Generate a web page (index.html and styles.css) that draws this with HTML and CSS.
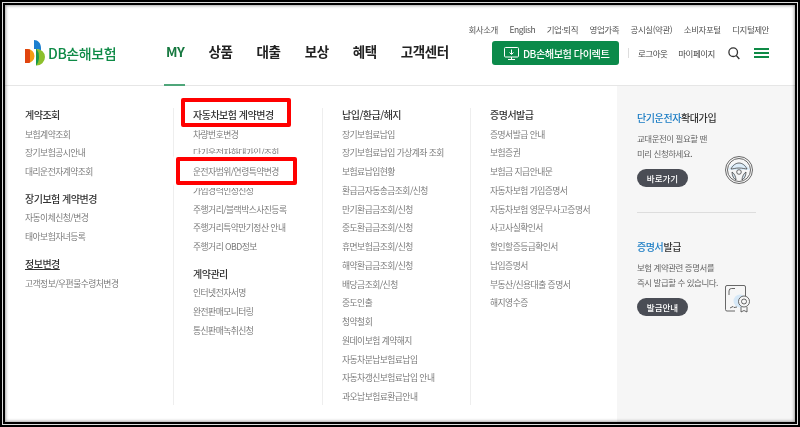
FILE: index.html
```html
<!DOCTYPE html>
<html lang="ko">
<head>
  <meta charset="utf-8">
  <link rel="stylesheet" href="styles.css">
</head>
<body>
  <div class="frame">
    <div class="page">
      <!-- Header -->
      <div class="header">
        <div class="util-links">
          <a>회사소개</a><a>English</a><a>기업·퇴직</a><a>영업가족</a><a>공시실(약관)</a><a>소비자포털</a><a>디지털제안</a>
        </div>
        <div class="header-main">
          <div class="logo">
            <svg class="logo-mark" width="21" height="26" viewBox="0 0 21 26">
              <path d="M0 9h2.500a7 7 0 0 1 0 14H0z" fill="#f39c12"/>
              <path d="M0 9h2.500q1.500 0 2.500 .5v13q-1 .5-2.500 .5H0z" fill="#e0440e"/>
              <path d="M9 0c4 0 7 3 7 8v3c-1.500-1.500-4-2-7-2z" fill="#1b7fd0"/>
              <path d="M11 9h.500a8.500 8 0 0 1 8.500 8 8.500 8.500 0 0 1-9 8.500z" fill="#8cc02c"/>
              <path d="M11 9h.500q2.500 3 2.500 8t-3 8.500z" fill="#17994b"/>
            </svg>
            <span class="logo-text">DB손해보험</span>
          </div>
          <div class="gnb">
            <a class="gnb-item active">MY</a><a class="gnb-item">상품</a><a class="gnb-item">대출</a><a class="gnb-item">보상</a><a class="gnb-item">혜택</a><a class="gnb-item">고객센터</a>
          </div>
          <a class="direct-btn">
            <svg width="15" height="15" viewBox="0 0 15 15" fill="none" stroke="#fff" stroke-width="1">
              <rect x="0.5" y="1.500" width="14" height="9.500" rx="1"/>
              <path d="M7.500 3.500v4.500M5.500 6.500l2 2 2-2M4 13.500h7M7.500 11v2.500"/>
            </svg>
            DB손해보험 다이렉트
          </a>
          <div class="member">
            <a>로그아웃</a><a>마이페이지</a>
          </div>
          <svg class="search-icon" width="12" height="13" viewBox="0 0 12 13" fill="none" stroke="#333" stroke-width="1.300">
            <circle cx="5.200" cy="5.200" r="4.300"/>
            <path d="M8.300 8.500l3 3.500"/>
          </svg>
          <div class="menu-icon"><i></i><i></i><i></i></div>
        </div>
      </div>

      <!-- All menu -->
      <div class="menu">
        <div class="menu-col">
          <div class="menu-title">계약조회</div>
          <a class="menu-item">보험계약조회</a>
          <a class="menu-item">장기보험공시안내</a>
          <a class="menu-item">대리운전자계약조회</a>
          <div class="menu-title next">장기보험 계약변경</div>
          <a class="menu-item">자동이체신청/변경</a>
          <a class="menu-item">태아보험자녀등록</a>
          <div class="menu-title next"><u>정보변경</u></div>
          <a class="menu-item">고객정보/우편물수령처변경</a>
        </div>
        <div class="menu-col">
          <div class="menu-title marked mark-title">자동차보험 계약변경</div>
          <a class="menu-item">차량번호변경</a>
          <a class="menu-item">다기운전자화대가입/조회</a>
          <a class="menu-item marked mark-item">운전자범위/연령특약변경</a>
          <a class="menu-item">가입경력인정신청</a>
          <a class="menu-item">주행거리/블랙박스사진등록</a>
          <a class="menu-item">주행거리특약만기정산 안내</a>
          <a class="menu-item">주행거리 OBD정보</a>
          <div class="menu-title next">계약관리</div>
          <a class="menu-item">인터넷전자서명</a>
          <a class="menu-item">완전판매모니터링</a>
          <a class="menu-item">통신판매녹취신청</a>
        </div>
        <div class="menu-col">
          <div class="menu-title">납입/환급/해지</div>
          <a class="menu-item">장기보험료납입</a>
          <a class="menu-item">장기보험료납입 가상계좌 조회</a>
          <a class="menu-item">보험료납입현황</a>
          <a class="menu-item">환급금자동송금조회/신청</a>
          <a class="menu-item">만기환급금조회/신청</a>
          <a class="menu-item">중도환급금조회/신청</a>
          <a class="menu-item">휴면보험금조회/신청</a>
          <a class="menu-item">해약환급금조회/신청</a>
          <a class="menu-item">배당금조회/신청</a>
          <a class="menu-item">중도인출</a>
          <a class="menu-item">청약철회</a>
          <a class="menu-item">원데이보험 계약해지</a>
          <a class="menu-item">자동차분납보험료납입</a>
          <a class="menu-item">자동차갱신보험료납입 안내</a>
          <a class="menu-item">과오납보험료환급안내</a>
        </div>
        <div class="menu-col">
          <div class="menu-title">증명서발급</div>
          <a class="menu-item">증명서발급 안내</a>
          <a class="menu-item">보험증권</a>
          <a class="menu-item">보험금 지급안내문</a>
          <a class="menu-item">자동차보험 가입증명서</a>
          <a class="menu-item">자동차보험 영문무사고증명서</a>
          <a class="menu-item">사고사실확인서</a>
          <a class="menu-item">할인할증등급확인서</a>
          <a class="menu-item">납입증명서</a>
          <a class="menu-item">부동산/신용대출 증명서</a>
          <a class="menu-item">해지영수증</a>
        </div>

        <!-- Side promo -->
        <div class="side">
          <div class="promo">
            <div class="promo-title"><span class="blue">단기운전자</span>확대가입</div>
            <p class="promo-text">교대운전이 필요할 땐<br>미리 신청하세요.</p>
            <a class="promo-btn">바로가기</a>
            <svg class="promo-icon wheel" width="30" height="30" viewBox="0 0 30 30" fill="none" stroke="#444" stroke-width="0.800">
              <circle cx="15" cy="15" r="13.500"/>
              <circle cx="15" cy="15" r="11.500"/>
              <path d="M4 15c3-6 7-7 11-7s8 1 11 7" fill="#dcecf8" stroke="none"/>
              <path d="M7 14c2-4 5-6 8-6s6 2 8 6c-2 0-4-1-8-1s-6 1-8 1z"/>
              <circle cx="15" cy="17" r="2.300"/>
              <path d="M8 17c2 1 4 5 4 8-2-1-4-4-4-8zM22 17c-2 1-4 5-4 8 2-1 4-4 4-8z" fill="#dcecf8"/>
            </svg>
          </div>
          <div class="promo">
            <div class="promo-title"><span class="blue">증명서</span>발급</div>
            <p class="promo-text">보험 계약관련 증명서를<br>즉시 발급할 수 있습니다.</p>
            <a class="promo-btn">발급안내</a>
            <svg class="promo-icon cert" width="26" height="28" viewBox="0 0 26 28" fill="none" stroke="#444" stroke-width="0.800">
              <circle cx="15" cy="16" r="6.500" fill="#d6e8f7" stroke="none"/>
              <path d="M10 26H2a1.500 1.500 0 0 1-1.500-1.500V2A1.500 1.500 0 0 1 2 .5h17A1.500 1.500 0 0 1 20.500 2v9"/>
              <path d="M4 10V6a2.500 2.500 0 0 1 2.500-2.500H10"/>
              <path d="M5 23l3-1.500 1 1 3-.5"/>
              <circle cx="19" cy="16.500" r="5.500" fill="#f6f6f6"/>
              <circle cx="19" cy="16.500" r="2.500"/>
              <path d="M16 22v5l3-1.500 3 1.500v-5"/>
            </svg>
          </div>
        </div>
      </div>
    </div>
  </div>
</body>
</html>
```

FILE: styles.css
```css
* {
  box-sizing: border-box;
}

html, body {
  margin: 0;
  background: #fff;
}

body {
  width: 800px;
  height: 427px;
  overflow: hidden;
  font-family: "Noto Sans CJK KR", "Noto Sans", sans-serif;
  color: #222;
}

a {
  color: inherit;
  text-decoration: none;
}

/* Screenshot frame */
.frame {
  width: 800px;
  height: 427px;
  border: 2px solid #000;
  padding: 1px;
  background: #ddd;
}

.page {
  position: relative;
  height: 100%;
  border: 2px solid #000;
  background: #fff;
  overflow: hidden;
}

.page::after {
  content: "";
  position: absolute;
  inset: 0;
  box-shadow: inset 0 0 3px 1px rgba(0,0,0,0.35);
  pointer-events: none;
}

/* The capture is a scaled-down image, so everything in it is a little soft */
.header,
.menu {
  filter: blur(0.45px);
}

/* Header */
.header {
  height: 81px;
  border-bottom: 1px solid #e6e6e6;
}

.util-links {
  display: flex;
  justify-content: flex-end;
  gap: 11.500px;
  height: 36px;
  padding: 18px 26px 0 0;
  font-size: 8.500px;
  line-height: 13px;
  letter-spacing: -0.450px;
  color: #555;
}

.header-main {
  display: flex;
  align-items: center;
  height: 24px;
  padding-left: 20px;
}

.logo {
  display: flex;
  align-items: center;
  width: 141px;
  margin-top: -1px;
}

.logo-mark {
  flex-shrink: 0;
  margin-right: 2px;
}

.logo-text {
  font-size: 14px;
  font-weight: 500;
  letter-spacing: -0.400px;
  color: #0e8a46;
}

.gnb {
  display: flex;
  gap: 24px;
  width: 326px;
  height: 45px;
  margin-top: 21px;
  font-size: 13.500px;
  font-weight: 700;
  letter-spacing: -0.400px;
}

.gnb-item {
  position: relative;
  line-height: 20px;
  height: 45px;
}

.gnb-item.active {
  color: #16783f;
}

.gnb-item.active::after {
  content: "";
  position: absolute;
  left: -2px;
  right: 0;
  bottom: 0;
  height: 2px;
  background: #4fa67a;
}

.direct-btn {
  display: flex;
  align-items: center;
  gap: 4px;
  width: 127px;
  height: 24px;
  padding-left: 12px;
  border-radius: 3px;
  background: #0b8a4a;
  color: #fff;
  font-size: 10.200px;
  font-weight: 500;
  letter-spacing: -0.500px;
}

.member {
  display: flex;
  gap: 11px;
  margin-left: 9px;
  padding-left: 10px;
  font-size: 8.500px;
  letter-spacing: -0.500px;
  color: #444;
  background: linear-gradient(#ddd, #ddd) left center / 1px 10px no-repeat;
}

.search-icon {
  margin-left: 13px;
}

.menu-icon {
  display: flex;
  flex-direction: column;
  gap: 2px;
  width: 15px;
  margin-left: 14px;
}

.menu-icon i {
  height: 2px;
  background: #0e8a46;
}

/* All menu */
.menu {
  display: grid;
  grid-template-columns: 148px 149px 148px 148px 1fr;
  height: 336px;
  padding-left: 20px;
}

.menu-col {
  height: 297px;
  margin-top: 22px;
  padding-left: 19px;
  border-left: 1px solid #eee;
}

.menu-col:first-child {
  padding-left: 0;
  border-left: 0;
}

.menu-title {
  height: 20.600px;
  font-size: 10px;
  font-weight: 500;
  line-height: 19px;
  letter-spacing: -0.500px;
  color: #333;
}

.menu-title:first-child {
  margin-top: -3px;
}

.menu-title.next {
  margin-top: 7px;
}

.menu-item {
  display: block;
  height: 18.750px;
  font-size: 8.800px;
  line-height: 18.750px;
  letter-spacing: -0.550px;
  color: #7c7c7c;
  white-space: nowrap;
}

/* Red marker boxes drawn on the capture */
.marked {
  position: relative;
  z-index: 1;
}

.marked::before {
  content: "";
  position: absolute;
  z-index: -1;
  box-sizing: border-box;
  border: 4px solid #f00;
  border-radius: 2px;
  background: #fff;
  box-shadow: 0 0 0 3px #fff;
}

.mark-title::before {
  left: -12px;
  top: -7px;
  width: 110px;
  height: 29px;
}

.mark-item::before {
  left: -17px;
  top: -6px;
  width: 121px;
  height: 28px;
}

/* Side promo */
.side {
  margin-left: -1px;
  padding: 0 39px 0 20px;
  background: #f6f6f6;
}

.promo {
  position: relative;
  height: 126px;
  padding-top: 24px;
}

.promo + .promo {
  height: 130px;
  padding-top: 26px;
  border-top: 1px solid #ddd;
}

.promo-title {
  font-size: 10px;
  font-weight: 500;
  line-height: 16px;
  letter-spacing: -0.400px;
  color: #333;
}

.blue {
  color: #1a7cc4;
}

.promo-text {
  margin: 4.500px 0 8.500px;
  font-size: 8.500px;
  line-height: 15px;
  letter-spacing: -0.480px;
  color: #666;
}

.promo-btn {
  display: block;
  width: 51px;
  height: 18px;
  border-radius: 9px;
  background: #4a4d55;
  color: #fff;
  font-size: 8.500px;
  font-weight: 500;
  line-height: 18px;
  text-align: center;
}

.promo-icon {
  position: absolute;
}

.wheel {
  right: 2px;
  top: 69px;
}

.cert {
  right: 5px;
  top: 72px;
}
```
